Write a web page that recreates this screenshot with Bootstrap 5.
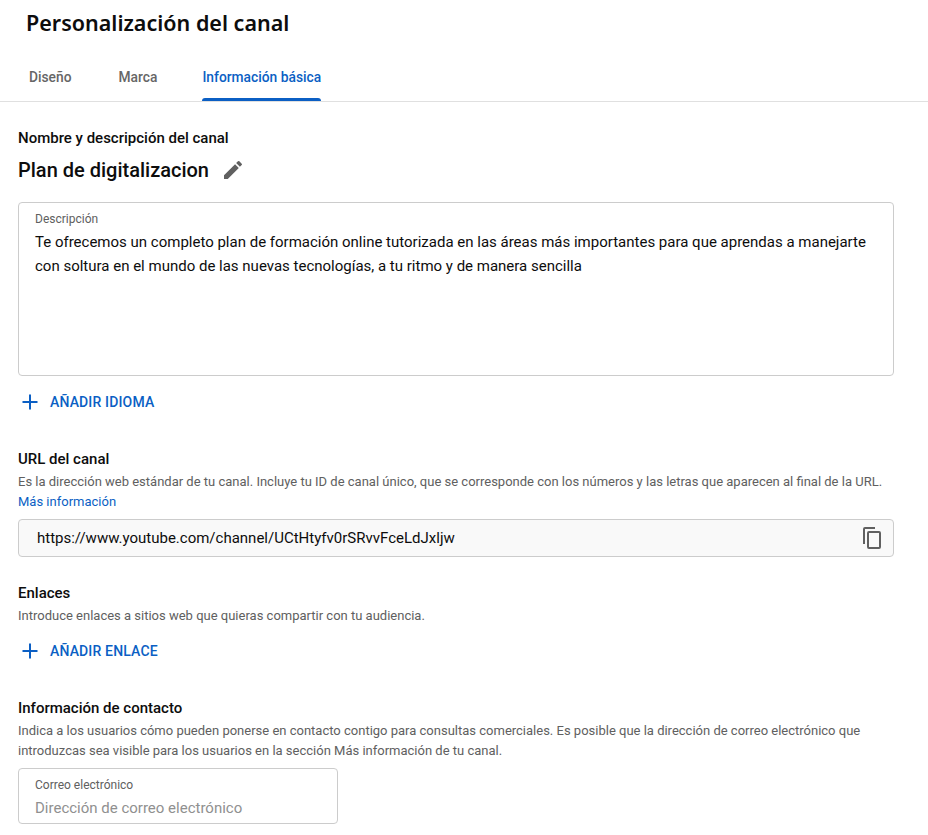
<!DOCTYPE html>
<html lang="es">
<head>
<meta charset="utf-8">
<title>Personalización del canal</title>
<link href="https://cdn.jsdelivr.net/npm/bootstrap@5.3.0/dist/css/bootstrap.min.css" rel="stylesheet">
<style>
html,body{height:835px;overflow:hidden}
body{font-family:Roboto,"Liberation Sans",sans-serif;color:#0d0d0d;background:#fff;font-size:13px}
.page-title{font-family:"Noto Sans",Roboto,sans-serif;font-weight:600;font-size:21.5px;line-height:28px;margin:0;padding:9px 0 0 26px;color:#0d0d0d}
.tab-bar{height:65px;padding:0 0 0 29px;border-bottom:1px solid #e0e0e0;gap:47px;margin:0;list-style:none;align-items:flex-end}
.tab-item{height:34px;position:relative;font-weight:500;font-size:13.8px;line-height:20px;color:#666}
.tab-item.is-on{color:#0b5fc4;margin-left:-2px;}
.tab-item.is-on::after{content:"";position:absolute;left:0;right:0;bottom:0;height:3px;background:#0b5fc4;border-radius:3px 3px 0 0}
.main-area{padding:0 34px 0 18px}
.sec-head{font-size:15px;font-weight:500;line-height:20px;margin:0}
.chan-name{font-size:20px;font-weight:500;line-height:28px}
.desc-box{height:174px;border:1px solid #ccc;border-radius:4px;padding:9px 16px}
.mini-label{font-size:12px;line-height:14px;color:#606060;margin-bottom:4px}
.desc-text{font-size:15px;line-height:24px;margin:0;color:#0d0d0d}
.add-btn{font-size:14px;font-weight:500;line-height:20px;letter-spacing:.15px;color:#0b5fc4;text-decoration:none;gap:11px;padding-left:3px}
.help-text{font-size:13px;line-height:20px;color:#606060;margin:0}
.help-link{font-size:13px;line-height:20px;color:#0b5fc4;text-decoration:none}
.url-box{height:38px;border:1px solid #ccc;border-radius:4px;background:#f9f9f9;padding:0 9px 0 18px;font-size:15px}
.mail-box{width:320px;height:56px;border:1px solid #ccc;border-radius:4px;padding:9px 16px}
.mail-ph{font-size:15px;line-height:24px;color:#909090}
.s-name{margin-top:26px}.s-chan{margin-top:8px}.s-desc{margin-top:18px}.s-add{margin-top:16px}
.s-url{margin-top:37px}.s-help{margin-top:3px}.s-help-url{margin-top:3px}.s-box{margin-top:7px}.s-links{margin-top:26px}.s-add-link{margin-top:15px}.s-contact{margin-top:37px}
</style>
</head>
<body>
<h1 class="page-title">Personalización del canal</h1>
<ul class="tab-bar d-flex">
<li class="tab-item">Diseño</li>
<li class="tab-item">Marca</li>
<li class="tab-item is-on">Información básica</li>
</ul>
<main class="main-area">
<h2 class="sec-head s-name">Nombre y descripción del canal</h2>
<div class="d-flex align-items-center gap-2 s-chan">
<span class="chan-name">Plan de digitalizacion</span>
<svg class="ms-1" width="24" height="24" viewBox="0 0 24 24" fill="#606060"><path d="M3 17.25V21h3.75L17.81 9.94l-3.75-3.75L3 17.25zM20.71 7.04a1 1 0 0 0 0-1.41l-2.34-2.34a1 1 0 0 0-1.41 0l-1.83 1.83 3.75 3.75 1.83-1.83z"/></svg>
</div>
<div class="desc-box s-desc">
<div class="mini-label">Descripción</div>
<p class="desc-text">Te ofrecemos un completo plan de formación online tutorizada en las áreas más importantes para que aprendas a manejarte con soltura en el mundo de las nuevas tecnologías, a tu ritmo y de manera sencilla</p>
</div>
<a href="#" class="add-btn d-flex align-items-center s-add">
<svg width="18" height="18" viewBox="0 0 18 18" fill="none" stroke="#0b5fc4" stroke-width="2"><path d="M9 1.5v15M1.5 9h15"/></svg>
<span>AÑADIR IDIOMA</span></a>
<h2 class="sec-head s-url">URL del canal</h2>
<p class="help-text s-help-url">Es la dirección web estándar de tu canal. Incluye tu ID de canal único, que se corresponde con los números y las letras que aparecen al final de la URL.</p>
<a href="#" class="help-link d-block">Más información</a>
<div class="url-box d-flex align-items-center justify-content-between s-box">
<span>https://www.youtube.com/channel/UCtHtyfv0rSRvvFceLdJxljw</span>
<svg width="24" height="24" viewBox="0 0 24 24" fill="none" stroke="#606060" stroke-width="2"><path d="M15 2H5a1 1 0 0 0-1 1v15"/><rect x="8" y="6" width="12" height="16" rx="1"/></svg>
</div>
<h2 class="sec-head s-links">Enlaces</h2>
<p class="help-text s-help">Introduce enlaces a sitios web que quieras compartir con tu audiencia.</p>
<a href="#" class="add-btn d-flex align-items-center s-add-link">
<svg width="18" height="18" viewBox="0 0 18 18" fill="none" stroke="#0b5fc4" stroke-width="2"><path d="M9 1.5v15M1.5 9h15"/></svg>
<span>AÑADIR ENLACE</span></a>
<h2 class="sec-head s-contact">Información de contacto</h2>
<p class="help-text s-help">Indica a los usuarios cómo pueden ponerse en contacto contigo para consultas comerciales. Es posible que la dirección de correo electrónico que introduzcas sea visible para los usuarios en la sección Más información de tu canal.</p>
<div class="mail-box s-box">
<div class="mini-label">Correo electrónico</div>
<div class="mail-ph">Dirección de correo electrónico</div>
</div>
</main>
<script src="https://cdn.jsdelivr.net/npm/bootstrap@5.3.0/dist/js/bootstrap.bundle.min.js"></script>
</body>
</html>
